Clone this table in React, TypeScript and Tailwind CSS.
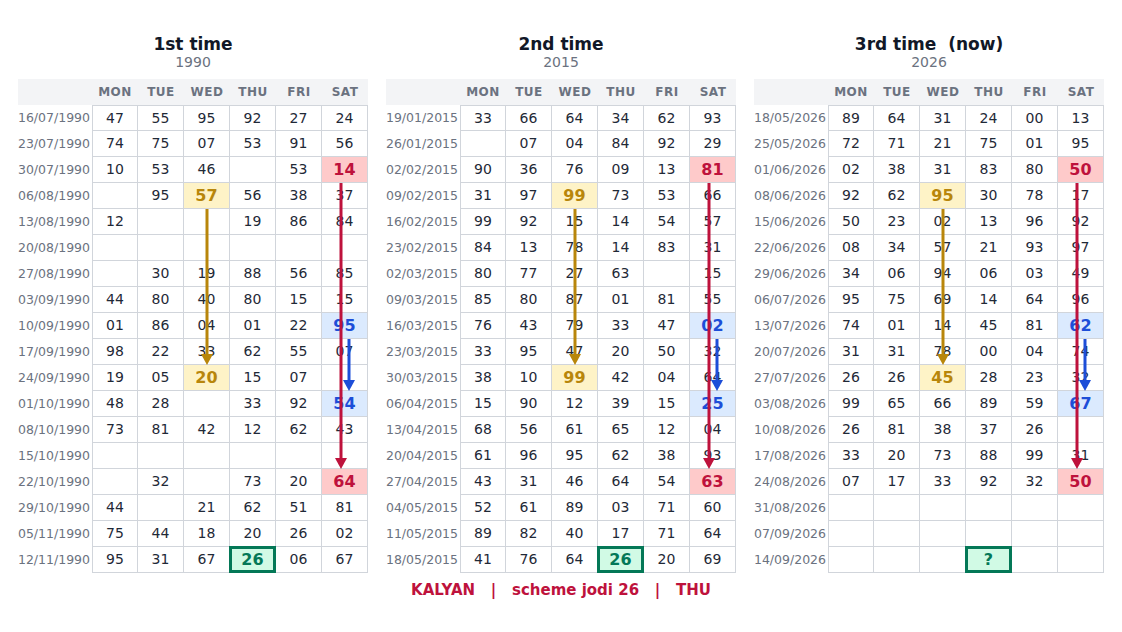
import React from "react";

type Mark = "red" | "yellow" | "blue" | "green";

interface Arrow {
  color: string;
  col: number;
  from: number;
  to: number;
  dx: number;
}

interface Panel {
  title: string;
  year: string;
  dates: string[];
  rows: string[][];
  marks: Record<string, Mark>;
  arrows: Arrow[];
}

const DAYS = ["MON", "TUE", "WED", "THU", "FRI", "SAT"];
const RED = "#be123c";
const YELLOW = "#b8860b";
const BLUE = "#1d4ed8";

const r = (s: string) => s.split(",");

// same marks / arrows in every panel
const MARKS: Record<string, Mark> = {
  "2-5": "red",
  "14-5": "red",
  "3-2": "yellow",
  "10-2": "yellow",
  "8-5": "blue",
  "11-5": "blue",
  "17-3": "green",
};

const ARROWS: Arrow[] = [
  { color: YELLOW, col: 2, from: 3, to: 10, dx: 0 },
  { color: RED, col: 5, from: 2, to: 14, dx: -4 },
  { color: BLUE, col: 5, from: 8, to: 11, dx: 4 },
];

const panels: Panel[] = [
  {
    title: "1st time",
    year: "1990",
    dates: [
      "16/07/1990", "23/07/1990", "30/07/1990", "06/08/1990", "13/08/1990", "20/08/1990",
      "27/08/1990", "03/09/1990", "10/09/1990", "17/09/1990", "24/09/1990", "01/10/1990",
      "08/10/1990", "15/10/1990", "22/10/1990", "29/10/1990", "05/11/1990", "12/11/1990",
    ],
    rows: [
      r("47,55,95,92,27,24"),
      r("74,75,07,53,91,56"),
      r("10,53,46,,53,14"),
      r(",95,57,56,38,37"),
      r("12,,,19,86,84"),
      r(",,,,,"),
      r(",30,19,88,56,85"),
      r("44,80,40,80,15,15"),
      r("01,86,04,01,22,95"),
      r("98,22,33,62,55,07"),
      r("19,05,20,15,07,"),
      r("48,28,,33,92,54"),
      r("73,81,42,12,62,43"),
      r(",,,,,"),
      r(",32,,73,20,64"),
      r("44,,21,62,51,81"),
      r("75,44,18,20,26,02"),
      r("95,31,67,26,06,67"),
    ],
    marks: MARKS,
    arrows: ARROWS,
  },
  {
    title: "2nd time",
    year: "2015",
    dates: [
      "19/01/2015", "26/01/2015", "02/02/2015", "09/02/2015", "16/02/2015", "23/02/2015",
      "02/03/2015", "09/03/2015", "16/03/2015", "23/03/2015", "30/03/2015", "06/04/2015",
      "13/04/2015", "20/04/2015", "27/04/2015", "04/05/2015", "11/05/2015", "18/05/2015",
    ],
    rows: [
      r("33,66,64,34,62,93"),
      r(",07,04,84,92,29"),
      r("90,36,76,09,13,81"),
      r("31,97,99,73,53,66"),
      r("99,92,15,14,54,57"),
      r("84,13,78,14,83,31"),
      r("80,77,27,63,,15"),
      r("85,80,87,01,81,55"),
      r("76,43,79,33,47,02"),
      r("33,95,47,20,50,32"),
      r("38,10,99,42,04,64"),
      r("15,90,12,39,15,25"),
      r("68,56,61,65,12,04"),
      r("61,96,95,62,38,93"),
      r("43,31,46,64,54,63"),
      r("52,61,89,03,71,60"),
      r("89,82,40,17,71,64"),
      r("41,76,64,26,20,69"),
    ],
    marks: MARKS,
    arrows: ARROWS,
  },
  {
    title: "3rd time  (now)",
    year: "2026",
    dates: [
      "18/05/2026", "25/05/2026", "01/06/2026", "08/06/2026", "15/06/2026", "22/06/2026",
      "29/06/2026", "06/07/2026", "13/07/2026", "20/07/2026", "27/07/2026", "03/08/2026",
      "10/08/2026", "17/08/2026", "24/08/2026", "31/08/2026", "07/09/2026", "14/09/2026",
    ],
    rows: [
      r("89,64,31,24,00,13"),
      r("72,71,21,75,01,95"),
      r("02,38,31,83,80,50"),
      r("92,62,95,30,78,17"),
      r("50,23,02,13,96,92"),
      r("08,34,57,21,93,97"),
      r("34,06,94,06,03,49"),
      r("95,75,69,14,64,96"),
      r("74,01,14,45,81,62"),
      r("31,31,78,00,04,74"),
      r("26,26,45,28,23,32"),
      r("99,65,66,89,59,67"),
      r("26,81,38,37,26,"),
      r("33,20,73,88,99,31"),
      r("07,17,33,92,32,50"),
      r(",,,,,"),
      r(",,,,,"),
      r(",,,?,,"),
    ],
    marks: MARKS,
    arrows: ARROWS,
  },
];

const markClass: Record<Mark, string> = {
  red: "bg-[#fecaca] text-[#be123c] font-bold text-[16px]",
  yellow: "bg-[#fef3c7] text-[#b8860b] font-bold text-[16px]",
  blue: "bg-[#dbeafe] text-[#1d4ed8] font-bold text-[16px]",
  green: "bg-[#d1fae5] text-[#047857] font-bold text-[16px]",
};

const ROW = 26;
const DATE_W = 74;
const COL_W = 46;

function Arrows({ arrows }: { arrows: Arrow[] }) {
  return (
    <svg className="absolute left-0 top-0 pointer-events-none" width={350} height={ROW * 19}>
      {arrows.map((a, i) => {
        const x = DATE_W + COL_W * a.col + COL_W / 2 + a.dx;
        const y1 = ROW + ROW * (a.from + 1);
        const tip = ROW + ROW * a.to;
        return (
          <g key={i}>
            <line x1={x} y1={y1} x2={x} y2={tip - 9} stroke={a.color} strokeWidth={3} />
            <polygon points={`${x - 6},${tip - 11} ${x + 6},${tip - 11} ${x},${tip}`} fill={a.color} />
          </g>
        );
      })}
    </svg>
  );
}

function PanelTable({ panel }: { panel: Panel }) {
  return (
    <div className="w-[350px] flex flex-col">
      {/* title */}
      <div className="text-center text-[17px] leading-5 font-bold text-[#111827] whitespace-pre">{panel.title}</div>
      <div className="text-center text-[14px] leading-4 text-[#6b7280] mb-[9px]">{panel.year}</div>

      {/* table */}
      <div className="relative grid grid-cols-[74px_repeat(6,46px)]">
        <div className="h-[26px] bg-[#f3f4f6]" />
        {DAYS.map((d) => (
          <div
            key={d}
            className="h-[26px] bg-[#f3f4f6] flex items-center justify-center text-[12px] font-bold tracking-[0.5px] text-[#6b7280]"
          >
            {d}
          </div>
        ))}

        {panel.rows.map((row, ri) => (
          <React.Fragment key={ri}>
            <div className="h-[26px] flex items-center justify-end pr-[2px] text-[12.5px] text-[#6b7280]">
              {panel.dates[ri]}
            </div>
            {row.map((v, ci) => {
              const mark = panel.marks[`${ri}-${ci}`];
              return (
                <div
                  key={ci}
                  className={`relative h-[26px] flex items-center justify-center border-r border-b border-[#d1d5db] ${
                    ci === 0 ? "border-l" : ""
                  } ${ri === 0 ? "border-t" : ""} ${mark ? markClass[mark] : "text-[14px] text-[#1f2937]"}`}
                >
                  {mark === "green" && (
                    <div className="absolute -left-px -top-px -right-px -bottom-px border-[3px] border-[#047857]" />
                  )}
                  <span className="relative">{v}</span>
                </div>
              );
            })}
          </React.Fragment>
        ))}

        <Arrows arrows={panel.arrows} />
      </div>
    </div>
  );
}

export default function App() {
  return (
    <div className="w-[1122px] h-[632px] bg-white pt-[34px] px-[18px] font-['DejaVu_Sans',sans-serif]">
      <div className="flex gap-[18px]">
        {panels.map((p) => (
          <PanelTable key={p.year} panel={p} />
        ))}
      </div>
      <div className="mt-[7px] text-center text-[15px] leading-5 font-bold text-[#be123c] whitespace-pre">
        {"KALYAN   |   scheme jodi 26   |   THU"}
      </div>
    </div>
  );
}
